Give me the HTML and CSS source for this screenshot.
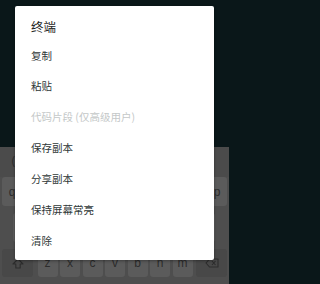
FILE: index.html
```html
<!DOCTYPE html>
<html lang="zh-CN">
<head>
<meta charset="utf-8">
<title>终端</title>
<link rel="stylesheet" href="styles.css">
</head>
<body>
<div class="screen">
  <div class="terminal"></div>
  <div class="keyboard">
    <div class="suggest"><span class="sugg">(</span></div>
    <div class="row">
      <span class="key">q</span><span class="key"></span><span class="key"></span><span class="key"></span><span class="key"></span><span class="key"></span><span class="key"></span><span class="key"></span><span class="key"></span><span class="key">p</span>
    </div>
    <div class="row row2">
      <span class="key"></span><span class="key"></span><span class="key"></span><span class="key"></span><span class="key"></span><span class="key"></span><span class="key"></span><span class="key"></span><span class="key"></span>
    </div>
    <div class="row row3">
      <span class="key special shift">
        <svg width="12" height="11" viewBox="0 0 12 11"><path d="M6 1 L11 6 H8.2 V10 H3.8 V6 H1 Z" fill="none" stroke="#2c2c2c" stroke-width="1.1" stroke-linejoin="round"/></svg>
      </span>
      <span class="key">z</span><span class="key">x</span><span class="key">c</span><span class="key">v</span><span class="key">b</span><span class="key">n</span><span class="key">m</span>
      <span class="key special del">
        <svg width="14" height="10" viewBox="0 0 14 10"><path d="M4.5 1 H13 V9 H4.5 L1 5 Z" fill="none" stroke="#2c2c2c" stroke-width="1.1" stroke-linejoin="round"/><path d="M7 3 L10.5 7 M10.5 3 L7 7" stroke="#2c2c2c" stroke-width="1.1"/></svg>
      </span>
    </div>
  </div>

  <div class="dialog">
    <div class="title">终端</div>
    <ul class="menu">
      <li class="item">复制</li>
      <li class="item">粘贴</li>
      <li class="item disabled">代码片段 (仅高级用户)</li>
      <li class="item">保存副本</li>
      <li class="item">分享副本</li>
      <li class="item">保持屏幕常亮</li>
      <li class="item">清除</li>
    </ul>
  </div>
</div>
</body>
</html>
```

FILE: styles.css
```css
* { box-sizing: border-box; }
html, body {
  margin: 0;
  padding: 0;
  width: 229px;
  height: 284px;
  overflow: hidden;
  background: #0a1719;
  font-family: "Noto Sans CJK SC", "Noto Sans", sans-serif;
}
.screen {
  position: relative;
  width: 229px;
  height: 284px;
  display: flex;
  flex-direction: column;
}
.terminal {
  height: 147px;
  background: #0a1719;
  flex: none;
}
.keyboard {
  flex: 1;
  background: #4e4e4e;
  display: flex;
  flex-direction: column;
}
.suggest {
  height: 30px;
  display: flex;
  align-items: center;
  padding-left: 11px;
  background: #4b4b4b;
}
.sugg {
  color: #2e2e2e;
  font-family: "DejaVu Sans", sans-serif;
  font-size: 12px;
}
.row {
  display: flex;
  gap: 2.8px;
  padding: 0 2px;
  height: 29px;
  margin-bottom: 7px;
}
.row2 {
  padding-left: 13px;
}
.row3 {
  gap: 2.5px;
  height: 28px;
  margin-top: 0;
  margin-bottom: 0;
}
.key {
  width: 20px;
  height: 100%;
  background: #5b5b5b;
  border-radius: 3px;
  display: flex;
  align-items: center;
  justify-content: center;
  color: #2c2c2c;
  font-family: "Liberation Sans", "DejaVu Sans", sans-serif;
  font-size: 12px;
}
.special {
  width: 31px;
  background: #484848;
}
.shift { margin-right: 2px; }
.del { margin-left: 1px; }

.dialog {
  position: absolute;
  left: 15px;
  top: 6px;
  width: 199px;
  height: 254px;
  background: #ffffff;
  border-radius: 2px;
  box-shadow: 0 1px 3px rgba(0,0,0,0.35);
}
.title {
  padding: 13px 0 0 16px;
  height: 34.5px;
  line-height: 16px;
  font-size: 12.5px;
  color: #1f2626;
}
.menu {
  list-style: none;
  margin: 0;
  padding: 0;
}
.item {
  height: 30.9px;
  line-height: 30.9px;
  padding-left: 16px;
  font-size: 10.5px;
  color: #2f3838;
  white-space: nowrap;
}
.item.disabled {
  color: #c4c8c8;
}
```
